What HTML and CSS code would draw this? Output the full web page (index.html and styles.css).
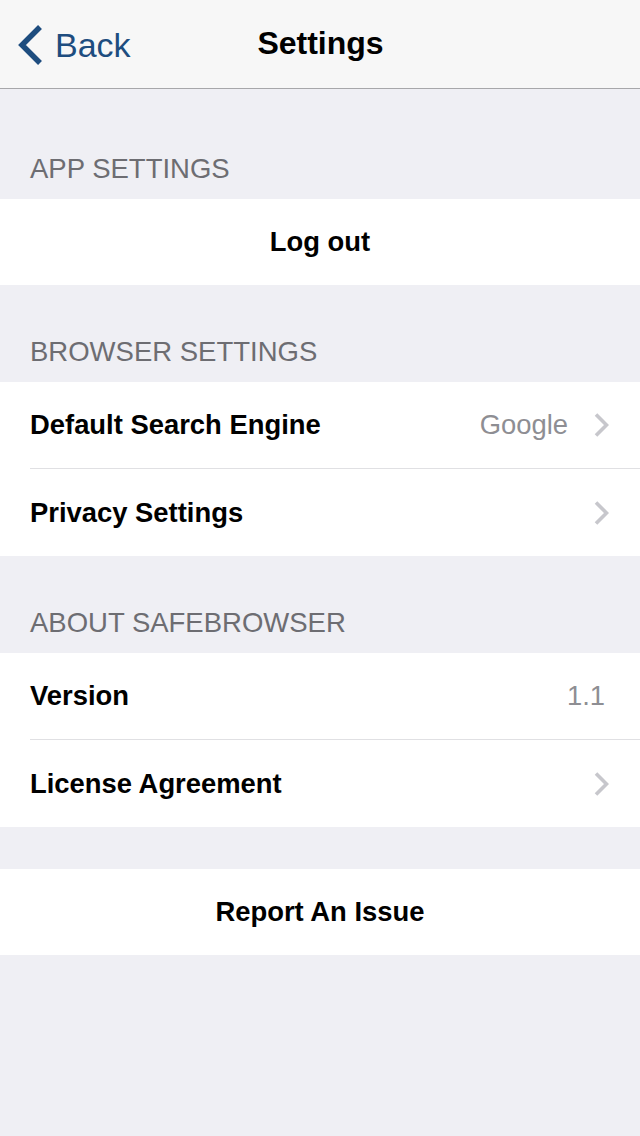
FILE: index.html
```html
<!DOCTYPE html>
<html lang="en">
<head>
<meta charset="utf-8">
<title>Settings</title>
<link rel="stylesheet" href="styles.css">
</head>
<body>
<header class="navbar">
  <a class="back" href="#">
    <svg class="back-chevron" width="26" height="40" viewBox="0 0 26 40" aria-hidden="true">
      <polyline points="23,2 5,20 23,38" fill="none" stroke="#1e4d7f" stroke-width="5.5" stroke-linejoin="miter" stroke-linecap="butt"/>
    </svg>
    <span>Back</span>
  </a>
  <h1 class="title">Settings</h1>
  <span class="nav-spacer"></span>
</header>

<main class="content">
  <section class="section first">
    <h2 class="section-header">APP SETTINGS</h2>
    <div class="group">
      <div class="row center"><span class="label">Log out</span></div>
    </div>
  </section>

  <section class="section">
    <h2 class="section-header">BROWSER SETTINGS</h2>
    <div class="group">
      <div class="row">
        <span class="label">Default Search Engine</span>
        <span class="value">Google</span>
        <svg class="chevron" width="15" height="24" viewBox="0 0 15 24" aria-hidden="true"><polyline points="2,1.5 12.5,12 2,22.5" fill="none" stroke="#c7c7cc" stroke-width="3.6"/></svg>
      </div>
      <div class="row">
        <span class="label">Privacy Settings</span>
        <svg class="chevron" width="15" height="24" viewBox="0 0 15 24" aria-hidden="true"><polyline points="2,1.5 12.5,12 2,22.5" fill="none" stroke="#c7c7cc" stroke-width="3.6"/></svg>
      </div>
    </div>
  </section>

  <section class="section">
    <h2 class="section-header">ABOUT SAFEBROWSER</h2>
    <div class="group">
      <div class="row">
        <span class="label">Version</span>
        <span class="value plain">1.1</span>
      </div>
      <div class="row">
        <span class="label">License Agreement</span>
        <svg class="chevron" width="15" height="24" viewBox="0 0 15 24" aria-hidden="true"><polyline points="2,1.5 12.5,12 2,22.5" fill="none" stroke="#c7c7cc" stroke-width="3.6"/></svg>
      </div>
    </div>
  </section>

  <section class="section bare">
    <div class="group">
      <div class="row center"><span class="label">Report An Issue</span></div>
    </div>
  </section>
</main>
</body>
</html>
```

FILE: styles.css
```css
* {
  box-sizing: border-box;
}

html, body {
  margin: 0;
  padding: 0;
}

body {
  width: 640px;
  min-height: 1136px;
  background: #efeff4;
  font-family: "Liberation Sans", Arial, Helvetica, sans-serif;
  color: #000;
}

.navbar {
  height: 89px;
  background: #f7f7f7;
  border-bottom: 1px solid #a7a7aa;
  display: flex;
  align-items: center;
  justify-content: space-between;
  padding: 0 16px 0 17px;
}

.back {
  display: flex;
  align-items: center;
  gap: 12px;
  color: #1e4d7f;
  text-decoration: none;
  font-size: 34px;
  width: 160px;
}

.back-chevron {
  display: block;
  margin-top: 1px;
}

.back span {
  line-height: 40px;
  margin-top: 1px;
}

.title {
  margin: 0;
  font-size: 32px;
  font-weight: 700;
  line-height: 40px;
  margin-top: -3px;
}

.nav-spacer {
  width: 160px;
}

.section-header {
  margin: 0;
  padding: 53px 30px 17px;
  font-size: 27.5px;
  line-height: 27px;
  font-weight: 400;
  color: #6d6d72;
}

.section.first .section-header {
  padding-top: 66px;
}

.section.bare {
  padding-top: 42px;
}

.group {
  background: #fff;
  padding-left: 30px;
}

.row {
  height: 86px;
  display: flex;
  align-items: center;
  padding-right: 31px;
  font-size: 27.4px;
}

.row + .row {
  border-top: 1px solid #e0e0e3;
  height: 88px;
  padding-top: 1px;
}

.row.center {
  justify-content: center;
  padding-right: 30px;
}

.label {
  font-weight: 700;
  flex: 1 1 auto;
}

.row.center .label {
  flex: 0 0 auto;
}

.value {
  color: #8e8e93;
  margin-right: 26px;
}

.value.plain {
  margin-right: 4px;
}

.chevron {
  display: block;
}
```
